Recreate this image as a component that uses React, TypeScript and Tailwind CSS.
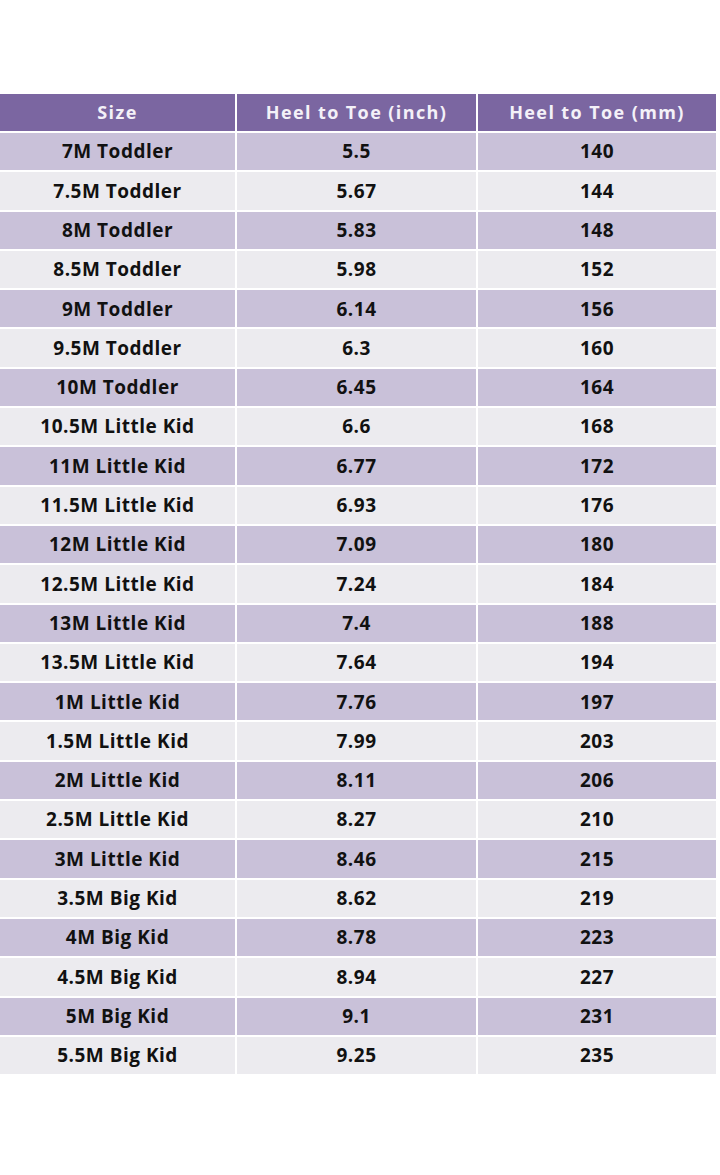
import React from 'react';

interface SizeRow {
  size: string;
  inch: string;
  mm: string;
}

const rows: SizeRow[] = [
  { size: '7M Toddler', inch: '5.5', mm: '140' },
  { size: '7.5M Toddler', inch: '5.67', mm: '144' },
  { size: '8M Toddler', inch: '5.83', mm: '148' },
  { size: '8.5M Toddler', inch: '5.98', mm: '152' },
  { size: '9M Toddler', inch: '6.14', mm: '156' },
  { size: '9.5M Toddler', inch: '6.3', mm: '160' },
  { size: '10M Toddler', inch: '6.45', mm: '164' },
  { size: '10.5M Little Kid', inch: '6.6', mm: '168' },
  { size: '11M Little Kid', inch: '6.77', mm: '172' },
  { size: '11.5M Little Kid', inch: '6.93', mm: '176' },
  { size: '12M Little Kid', inch: '7.09', mm: '180' },
  { size: '12.5M Little Kid', inch: '7.24', mm: '184' },
  { size: '13M Little Kid', inch: '7.4', mm: '188' },
  { size: '13.5M Little Kid', inch: '7.64', mm: '194' },
  { size: '1M Little Kid', inch: '7.76', mm: '197' },
  { size: '1.5M Little Kid', inch: '7.99', mm: '203' },
  { size: '2M Little Kid', inch: '8.11', mm: '206' },
  { size: '2.5M Little Kid', inch: '8.27', mm: '210' },
  { size: '3M Little Kid', inch: '8.46', mm: '215' },
  { size: '3.5M Big Kid', inch: '8.62', mm: '219' },
  { size: '4M Big Kid', inch: '8.78', mm: '223' },
  { size: '4.5M Big Kid', inch: '8.94', mm: '227' },
  { size: '5M Big Kid', inch: '9.1', mm: '231' },
  { size: '5.5M Big Kid', inch: '9.25', mm: '235' },
];

const App: React.FC = () => {
  return (
    <div className="w-[720px] h-[1175px] bg-white pt-[94px] pr-[4px] font-['Open_Sans',sans-serif]">
      <div className="grid grid-cols-[235px_239px_238px] gap-x-[2px] gap-y-[2px]">
        {['Size', 'Heel to Toe (inch)', 'Heel to Toe (mm)'].map((h) => (
          <div
            key={h}
            className="h-[37px] bg-[#7b66a1] flex items-center justify-center text-[18px] font-bold tracking-[1.4px] text-[#f4f1f8]"
          >
            {h}
          </div>
        ))}
        {rows.map((r, i) => {
          const bg = i % 2 === 0 ? 'bg-[#c9c1d9]' : 'bg-[#ecebef]';
          return (
            <React.Fragment key={r.size}>
              <div className={`h-[37.3px] ${bg} flex items-center justify-center text-[19px] font-bold tracking-[0.5px] text-[#111]`}>
                {r.size}
              </div>
              <div className={`h-[37.3px] ${bg} flex items-center justify-center text-[19px] font-bold tracking-[0.5px] text-[#111]`}>
                {r.inch}
              </div>
              <div className={`h-[37.3px] ${bg} flex items-center justify-center text-[19px] font-bold tracking-[0.5px] text-[#111]`}>
                {r.mm}
              </div>
            </React.Fragment>
          );
        })}
      </div>
    </div>
  );
};

export default App;
